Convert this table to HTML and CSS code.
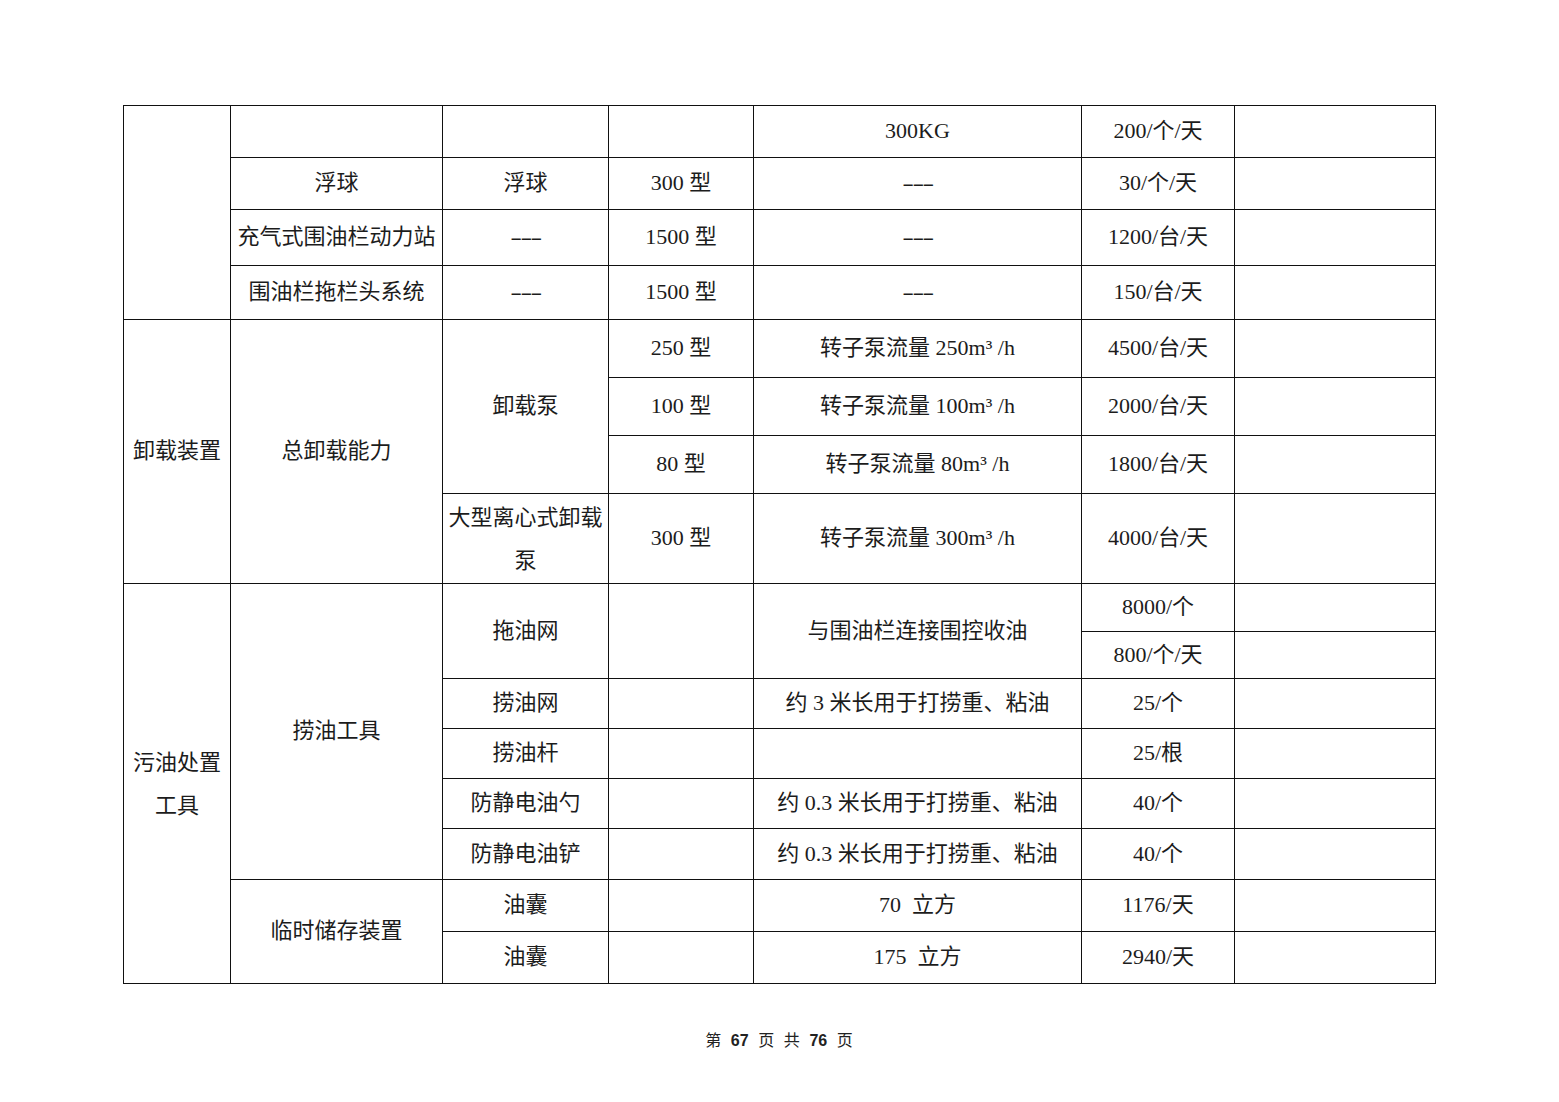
FILE: index.html
```html
<!DOCTYPE html>
<html lang="zh-CN">
<head>
<meta charset="utf-8">
<title>第67页</title>
<link rel="stylesheet" href="styles.css">
</head>
<body>
<div class="page">
<table class="grid">
<colgroup>
<col class="c1"><col class="c2"><col class="c3"><col class="c4"><col class="c5"><col class="c6"><col class="c7">
</colgroup>
<tbody>
<tr class="h52"><td rowspan="4"></td><td></td><td></td><td></td><td>300KG</td><td>200/个/天</td><td></td></tr>
<tr class="h52"><td>浮球</td><td>浮球</td><td>300 型</td><td><span class="dash">---</span></td><td>30/个/天</td><td></td></tr>
<tr class="h56"><td>充气式围油栏动力站</td><td><span class="dash">---</span></td><td>1500 型</td><td><span class="dash">---</span></td><td>1200/台/天</td><td></td></tr>
<tr class="h54"><td>围油栏拖栏头系统</td><td><span class="dash">---</span></td><td>1500 型</td><td><span class="dash">---</span></td><td>150/台/天</td><td></td></tr>
<tr class="h58"><td rowspan="4">卸载装置</td><td rowspan="4">总卸载能力</td><td rowspan="3">卸载泵</td><td>250 型</td><td>转子泵流量 250m³ /h</td><td>4500/台/天</td><td></td></tr>
<tr class="h58"><td>100 型</td><td>转子泵流量 100m³ /h</td><td>2000/台/天</td><td></td></tr>
<tr class="h58"><td>80 型</td><td>转子泵流量 80m³ /h</td><td>1800/台/天</td><td></td></tr>
<tr class="h90"><td class="wrap">大型离心式卸载泵</td><td>300 型</td><td>转子泵流量 300m³ /h</td><td>4000/台/天</td><td></td></tr>
<tr class="h48"><td rowspan="8" class="wrap">污油处置工具</td><td rowspan="6">捞油工具</td><td rowspan="2">拖油网</td><td rowspan="2"></td><td rowspan="2">与围油栏连接围控收油</td><td>8000/个</td><td></td></tr>
<tr class="h47"><td>800/个/天</td><td></td></tr>
<tr class="h50"><td>捞油网</td><td></td><td>约 3 米长用于打捞重、粘油</td><td>25/个</td><td></td></tr>
<tr class="h50"><td>捞油杆</td><td></td><td></td><td>25/根</td><td></td></tr>
<tr class="h50"><td>防静电油勺</td><td></td><td>约 0.3 米长用于打捞重、粘油</td><td>40/个</td><td></td></tr>
<tr class="h51"><td>防静电油铲</td><td></td><td>约 0.3 米长用于打捞重、粘油</td><td>40/个</td><td></td></tr>
<tr class="h52"><td rowspan="2">临时储存装置</td><td>油囊</td><td></td><td>70&nbsp; 立方</td><td>1176/天</td><td></td></tr>
<tr class="h52"><td>油囊</td><td></td><td>175&nbsp; 立方</td><td>2940/天</td><td></td></tr>
</tbody>
</table>
<div class="footer">第 <b>67</b> 页 共 <b>76</b> 页</div>
</div>
</body>
</html>
```

FILE: styles.css
```css
html, body {
  margin: 0;
  padding: 0;
  background: #ffffff;
}
.page {
  width: 1559px;
  height: 1102px;
  box-sizing: border-box;
  padding: 105px 0 0 123px;
}
.grid {
  border-collapse: collapse;
  table-layout: fixed;
  width: 1312px;
  font-family: "Liberation Serif", "Noto Sans CJK SC", serif;
  font-size: 22px;
  color: #1c1c1c;
}
.c1 { width: 107px; }
.c2 { width: 212px; }
.c3 { width: 166px; }
.c4 { width: 145px; }
.c5 { width: 328px; }
.c6 { width: 153px; }
.c7 { width: 201px; }
.grid td {
  border: 1px solid #111;
  text-align: center;
  vertical-align: middle;
  padding: 0 3px;
  line-height: 1.2;
  white-space: nowrap;
}
.grid td.wrap {
  white-space: normal;
  line-height: 43px;
}
.dash {
  display: inline-block;
  transform: scaleX(1.6);
  letter-spacing: -1px;
}
.h47 { height: 47px; }
.h48 { height: 48px; }
.h50 { height: 50px; }
.h51 { height: 51px; }
.h52 { height: 52px; }
.h54 { height: 54px; }
.h56 { height: 56px; }
.h58 { height: 58px; }
.h90 { height: 90px; }
.footer {
  width: 1312px;
  margin-top: 44px;
  text-align: center;
  font-family: "Noto Sans CJK SC", sans-serif;
  font-size: 16px;
  line-height: 22px;
  color: #222;
  word-spacing: 6px;
}
.footer b {
  font-family: "Liberation Sans", "Noto Sans CJK SC", sans-serif;
  font-weight: 700;
}
```
